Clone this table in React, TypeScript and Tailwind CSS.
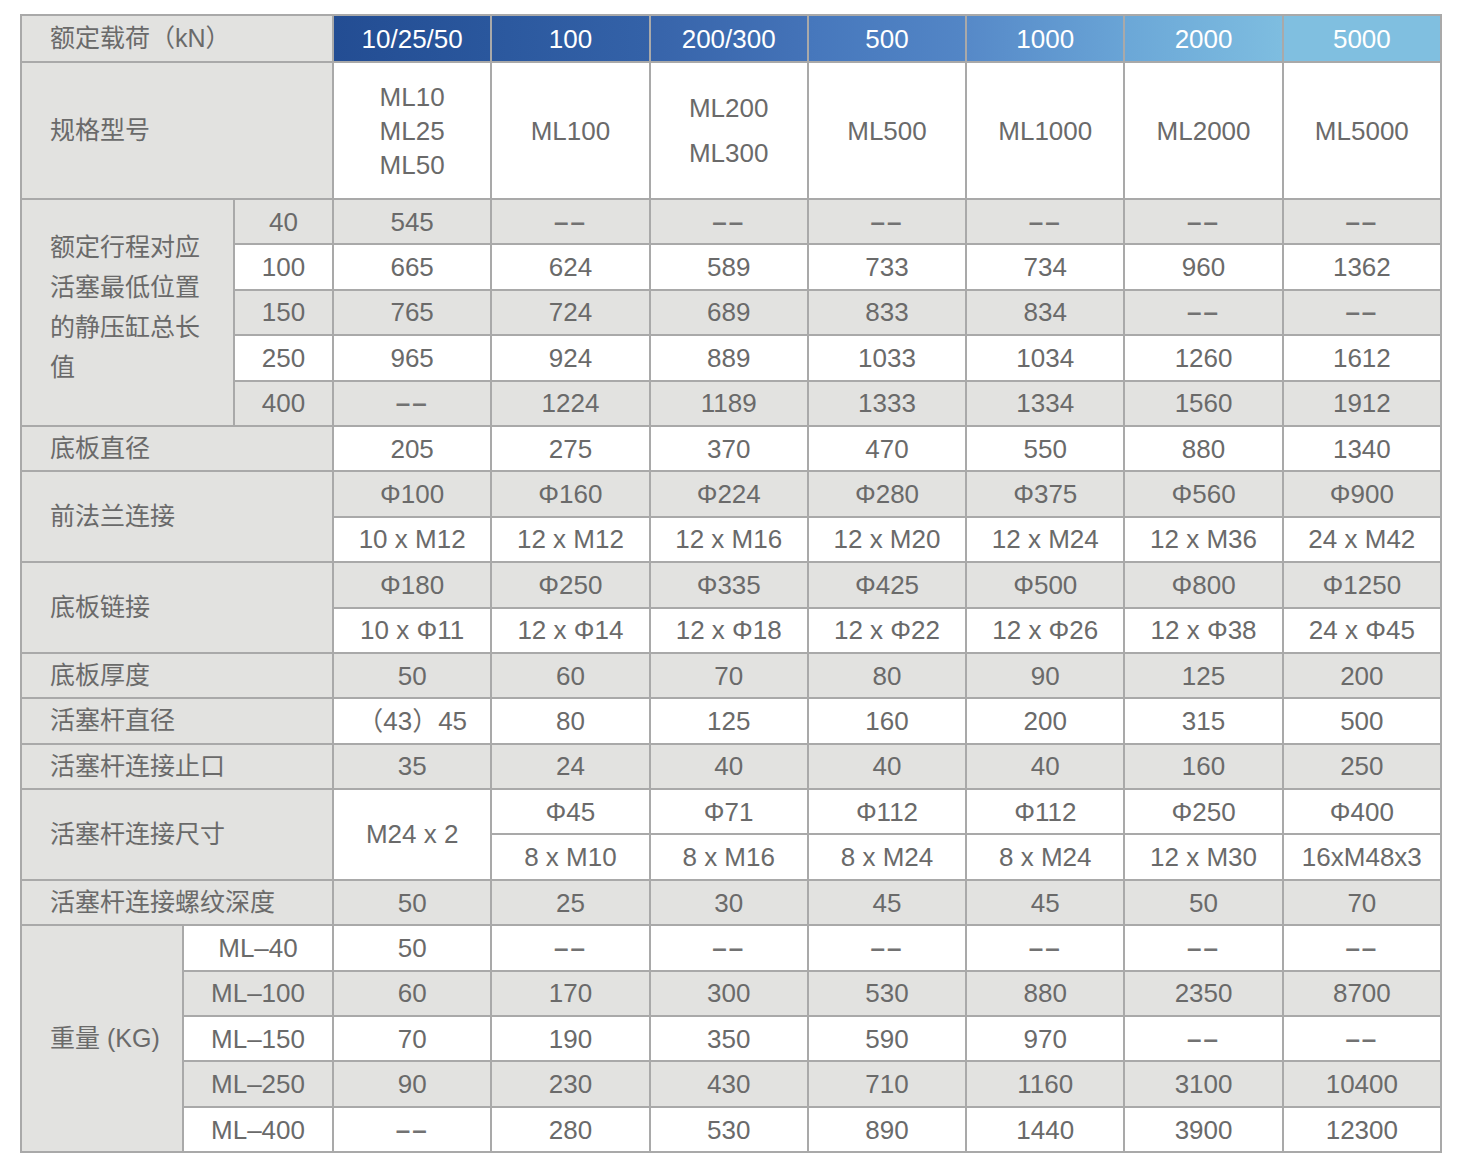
import * as React from "react"

const line = "border-2 border-[#a9a9a9]"
const grey = "bg-[#e2e2e0]"
const white = "bg-white"

const heads = [
  { t: "10/25/50", c: "bg-linear-to-r from-[#234d93] to-[#2a579d]" },
  { t: "100", c: "bg-linear-to-r from-[#2b589e] to-[#3462a8]" },
  { t: "200/300", c: "bg-linear-to-r from-[#3764aa] to-[#4473b8]" },
  { t: "500", c: "bg-linear-to-r from-[#4677bc] to-[#5386c6]" },
  { t: "1000", c: "bg-linear-to-r from-[#5689c8] to-[#69a4d6]" },
  { t: "2000", c: "bg-linear-to-r from-[#6ba7d7] to-[#7ebde0]" },
  { t: "5000", c: "bg-[#80bfe0]" },
]

const stroke = [
  { k: "40", bg: grey, v: ["545", "-", "-", "-", "-", "-", "-"] },
  { k: "100", bg: white, v: ["665", "624", "589", "733", "734", "960", "1362"] },
  { k: "150", bg: grey, v: ["765", "724", "689", "833", "834", "-", "-"] },
  { k: "250", bg: white, v: ["965", "924", "889", "1033", "1034", "1260", "1612"] },
  { k: "400", bg: grey, v: ["-", "1224", "1189", "1333", "1334", "1560", "1912"] },
]

const weight = [
  { k: "ML–40", bg: white, v: ["50", "-", "-", "-", "-", "-", "-"] },
  { k: "ML–100", bg: grey, v: ["60", "170", "300", "530", "880", "2350", "8700"] },
  { k: "ML–150", bg: white, v: ["70", "190", "350", "590", "970", "-", "-"] },
  { k: "ML–250", bg: grey, v: ["90", "230", "430", "710", "1160", "3100", "10400"] },
  { k: "ML–400", bg: white, v: ["-", "280", "530", "890", "1440", "3900", "12300"] },
]

function Val({ v }: { v: string }) {
  if (v === "-") return <span className="font-bold tracking-[2px] text-[#727272]">––</span>
  return <>{v}</>
}

function Cells({ vals, bg }: { vals: string[]; bg: string }) {
  return (
    <>
      {vals.map((v, i) => (
        <td key={i} className={`${line} ${bg} text-center align-middle`}>
          <Val v={v} />
        </td>
      ))}
    </>
  )
}

function Label({
  children,
  colSpan = 3,
  rowSpan = 1,
}: {
  children: React.ReactNode
  colSpan?: number
  rowSpan?: number
}) {
  return (
    <td
      colSpan={colSpan}
      rowSpan={rowSpan}
      className={`${line} ${grey} pl-[28px] text-left align-middle text-[25px]`}
    >
      {children}
    </td>
  )
}

export default function App() {
  const row = "h-[45.4px]"
  return (
    <div className="min-h-screen bg-white pl-[20px] pt-[14px]">
      <table className="w-[1422px] table-fixed border-collapse font-['Liberation_Sans','Noto_Sans_CJK_SC',sans-serif] text-[26px] leading-none text-[#6a6a6a]">
        <colgroup>
          <col className="w-[162px]" />
          <col className="w-[51px]" />
          <col className="w-[99px]" />
          <col />
          <col />
          <col />
          <col />
          <col />
          <col />
          <col />
        </colgroup>
        <tbody>
          <tr className="h-[47px]">
            <Label>额定载荷（kN）</Label>
            {heads.map((h) => (
              <td key={h.t} className={`${line} ${h.c} text-center align-middle text-white`}>
                {h.t}
              </td>
            ))}
          </tr>

          <tr className="h-[137px]">
            <Label>规格型号</Label>
            <td className={`${line} ${white} text-center align-middle leading-[34px]`}>
              <div>ML10</div>
              <div>ML25</div>
              <div>ML50</div>
            </td>
            <td className={`${line} ${white} text-center align-middle`}>ML100</td>
            <td className={`${line} ${white} text-center align-middle leading-[45px]`}>
              <div>ML200</div>
              <div>ML300</div>
            </td>
            <td className={`${line} ${white} text-center align-middle`}>ML500</td>
            <td className={`${line} ${white} text-center align-middle`}>ML1000</td>
            <td className={`${line} ${white} text-center align-middle`}>ML2000</td>
            <td className={`${line} ${white} text-center align-middle`}>ML5000</td>
          </tr>

          {stroke.map((r, i) => (
            <tr key={r.k} className={row}>
              {i === 0 && (
                <Label colSpan={2} rowSpan={5}>
                  <div className="w-[155px] pb-[10px] leading-[40px]">
                    额定行程对应活塞最低位置的静压缸总长值
                  </div>
                </Label>
              )}
              <td className={`${line} ${r.bg} text-center align-middle`}>{r.k}</td>
              <Cells vals={r.v} bg={r.bg} />
            </tr>
          ))}

          <tr className={row}>
            <Label>底板直径</Label>
            <Cells vals={["205", "275", "370", "470", "550", "880", "1340"]} bg={white} />
          </tr>

          <tr className={row}>
            <Label rowSpan={2}>前法兰连接</Label>
            <Cells vals={["Φ100", "Φ160", "Φ224", "Φ280", "Φ375", "Φ560", "Φ900"]} bg={grey} />
          </tr>
          <tr className={row}>
            <Cells
              vals={["10 x M12", "12 x M12", "12 x M16", "12 x M20", "12 x M24", "12 x M36", "24 x M42"]}
              bg={white}
            />
          </tr>

          <tr className={row}>
            <Label rowSpan={2}>底板链接</Label>
            <Cells vals={["Φ180", "Φ250", "Φ335", "Φ425", "Φ500", "Φ800", "Φ1250"]} bg={grey} />
          </tr>
          <tr className={row}>
            <Cells
              vals={["10 x Φ11", "12 x Φ14", "12 x Φ18", "12 x Φ22", "12 x Φ26", "12 x Φ38", "24 x Φ45"]}
              bg={white}
            />
          </tr>

          <tr className={row}>
            <Label>底板厚度</Label>
            <Cells vals={["50", "60", "70", "80", "90", "125", "200"]} bg={grey} />
          </tr>
          <tr className={row}>
            <Label>活塞杆直径</Label>
            <Cells vals={["（43）45", "80", "125", "160", "200", "315", "500"]} bg={white} />
          </tr>
          <tr className={row}>
            <Label>活塞杆连接止口</Label>
            <Cells vals={["35", "24", "40", "40", "40", "160", "250"]} bg={grey} />
          </tr>

          <tr className={row}>
            <Label rowSpan={2}>活塞杆连接尺寸</Label>
            <td rowSpan={2} className={`${line} ${white} text-center align-middle`}>
              M24 x 2
            </td>
            <Cells vals={["Φ45", "Φ71", "Φ112", "Φ112", "Φ250", "Φ400"]} bg={white} />
          </tr>
          <tr className={row}>
            <Cells vals={["8 x M10", "8 x M16", "8 x M24", "8 x M24", "12 x M30", "16xM48x3"]} bg={white} />
          </tr>

          <tr className={row}>
            <Label>活塞杆连接螺纹深度</Label>
            <Cells vals={["50", "25", "30", "45", "45", "50", "70"]} bg={grey} />
          </tr>

          {weight.map((r, i) => (
            <tr key={r.k} className={row}>
              {i === 0 && (
                <Label colSpan={1} rowSpan={5}>
                  重量 (KG)
                </Label>
              )}
              <td colSpan={2} className={`${line} ${r.bg} text-center align-middle`}>
                {r.k}
              </td>
              <Cells vals={r.v} bg={r.bg} />
            </tr>
          ))}
        </tbody>
      </table>
    </div>
  )
}
